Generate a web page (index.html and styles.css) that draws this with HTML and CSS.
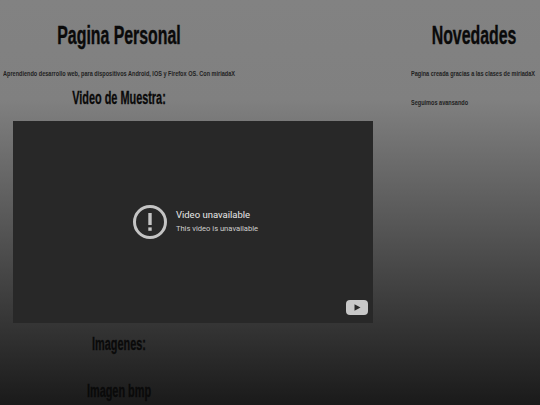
FILE: index.html
```html
<!DOCTYPE html>
<html lang="es">
<head>
    <meta charset="UTF-8">
    <title>Pagina Personal</title>
    <link rel="stylesheet" href="styles.css">
</head>
<body>
    <div class="page">
        <div class="main">
            <div class="intro">
                <h1>Pagina Personal</h1>
                <p class="text">Aprendiendo desarrollo web, para dispositivos Android, IOS y Firefox OS. Con miriadaX</p>
                <h2>Video de Muestra:</h2>
            </div>
            <div class="video">
                <div class="video-error">
                    <svg class="alert-icon" viewBox="0 0 36 36" width="36" height="36">
                        <circle cx="18" cy="18" r="15.5" fill="none" stroke="#c4c4c4" stroke-width="3"/>
                        <rect x="16.3" y="9" width="3.4" height="12" fill="#c4c4c4"/>
                        <rect x="16.3" y="23.4" width="3.4" height="3.4" fill="#c4c4c4"/>
                    </svg>
                    <div>
                        <div class="error-title">Video unavailable</div>
                        <div class="error-sub">This video is unavailable</div>
                    </div>
                </div>
                <svg class="yt-logo" viewBox="0 0 22 15" width="22" height="15">
                    <rect width="22" height="15" rx="4" fill="#c8c8c8"/>
                    <path d="M8.5 4.2 L14.5 7.5 L8.5 10.8 Z" fill="#282828"/>
                </svg>
            </div>
            <div class="intro">
                <h2 class="images-title">Imagenes:</h2>
                <h2 class="bmp-title">Imagen bmp</h2>
            </div>
        </div>
        <div class="side">
            <h1>Novedades</h1>
            <p class="text">Pagina creada gracias a las clases de miriadaX</p>
            <p class="text second">Seguimos avansando</p>
        </div>
    </div>
</body>
</html>
```

FILE: styles.css
```css
* {
    margin: 0;
    padding: 0;
    box-sizing: border-box;
}

html, body {
    height: 405px;
    overflow: hidden;
}

body {
    background: linear-gradient(180deg, #828282 0, #808080 100px, #1a1a1a 405px);
    font-family: "Liberation Sans", sans-serif;
    color: #0a0a0a;
}

.page {
    display: flex;
}

.main {
    width: 408px;
}

.intro {
    width: 238px;
    text-align: center;
}

.side {
    width: 132px;
}

/* no condensed font installed, so the headings are squeezed */
h1 {
    display: flex;
    justify-content: center;
    font-size: 26px;
    line-height: 30px;
    padding-top: 20px;
    white-space: nowrap;
    transform: scaleX(0.61);
    -webkit-text-stroke: 0.4px #0a0a0a;
}

h2 {
    font-size: 18px;
    line-height: 20px;
    transform: scaleX(0.605);
    -webkit-text-stroke: 0.3px #0a0a0a;
}

.intro h2 {
    margin-top: 9px;
}

.text {
    font-size: 7.5px;
    line-height: 10px;
    margin: 19px 0 0 3px;
    font-weight: bold;
    color: #222;
    text-align: left;
    white-space: nowrap;
    transform: scaleX(0.74);
    transform-origin: left center;
}

.side .second {
    margin-top: 19px;
}

.video {
    position: relative;
    width: 360px;
    height: 202px;
    margin: 13px 0 0 13px;
    background: #282828;
    font-family: Roboto, sans-serif;
    display: flex;
    align-items: center;
    justify-content: center;
}

.video-error {
    display: flex;
    align-items: center;
    gap: 8px;
    margin-left: 4px;
}

.error-title {
    font-size: 9.5px;
    line-height: 14px;
    color: #e8e8e8;
}

.error-sub {
    font-size: 7.6px;
    line-height: 14px;
    color: #cfcfcf;
}

.yt-logo {
    position: absolute;
    right: 5px;
    bottom: 8px;
}

.intro .images-title {
    margin-top: 11px;
}

.intro .bmp-title {
    margin-top: 27px;
}
```
